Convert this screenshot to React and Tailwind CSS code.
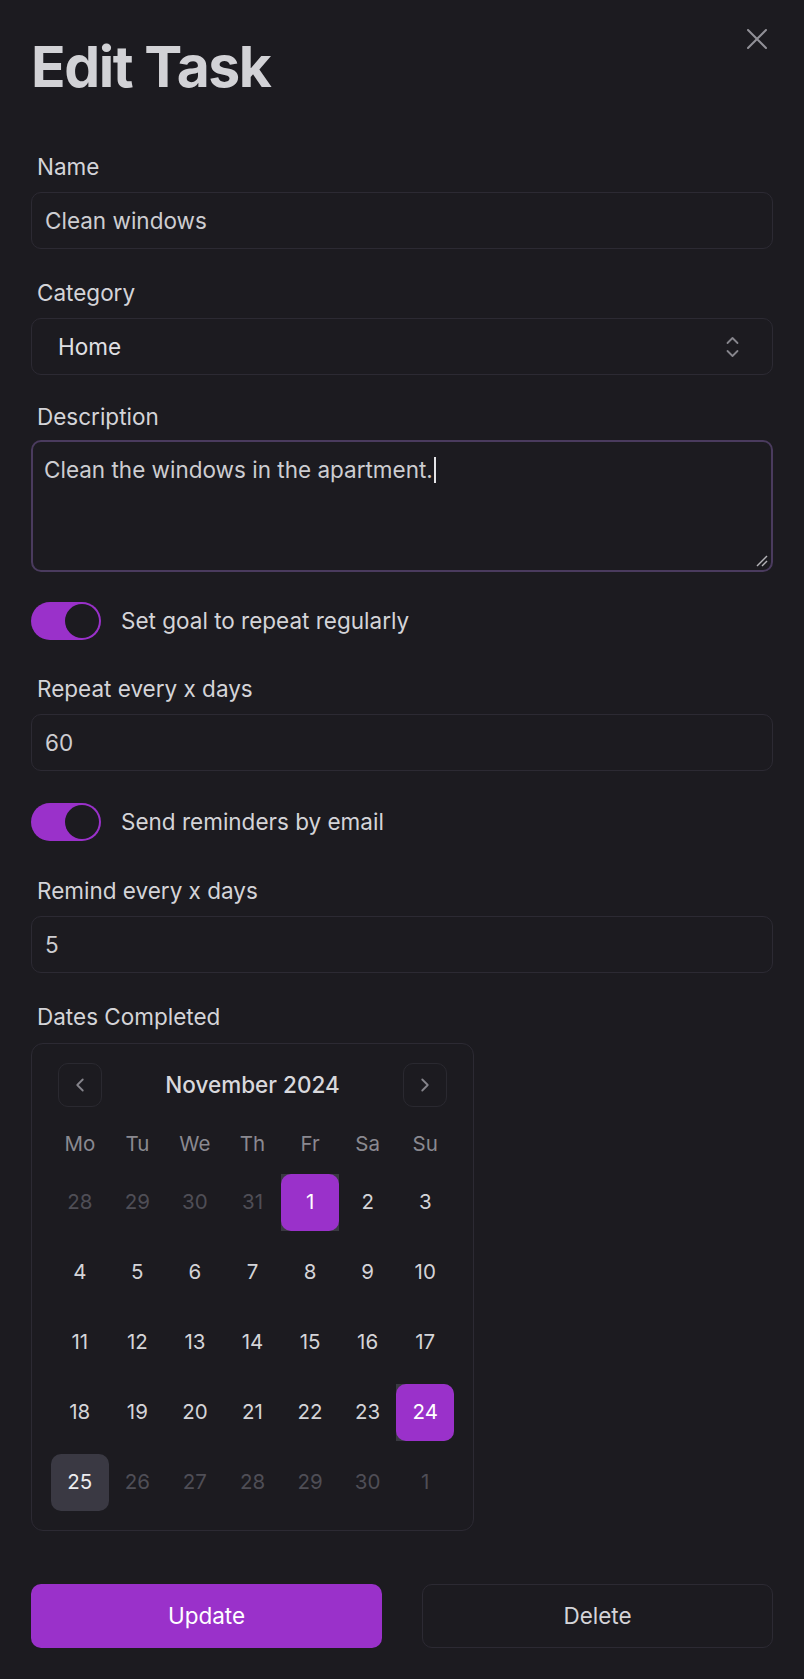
import React from "react";

const PURPLE = "bg-[#9a31ca]";

function Label({ children }) {
  return (
    <div className="pl-[6px] h-[28px] leading-[28px] text-[22.5px] text-[#d4d4d8]">
      {children}
    </div>
  );
}

function Toggle({ label }) {
  return (
    <div className="flex items-center gap-[20px]">
      <div className={`w-[70px] h-[38px] rounded-full ${PURPLE} p-[2px] flex`}>
        <div className="ml-auto size-[34px] rounded-full bg-[#1c1b20]" />
      </div>
      <span className="text-[22.5px] leading-[28px] text-[#d4d4d8]">{label}</span>
    </div>
  );
}

function Input({ value, className = "" }) {
  return (
    <div
      className={`h-[57px] rounded-[10px] border border-[#2c2a33] px-[13px] flex items-center text-[22.5px] text-[#cdcdd1] ${className}`}
    >
      {value}
    </div>
  );
}

const weekdays = ["Mo", "Tu", "We", "Th", "Fr", "Sa", "Su"];

const days = [
  [
    { d: 28, o: true },
    { d: 29, o: true },
    { d: 30, o: true },
    { d: 31, o: true },
    { d: 1, s: "full" },
    { d: 2 },
    { d: 3 },
  ],
  [4, 5, 6, 7, 8, 9, 10].map((d) => ({ d })),
  [11, 12, 13, 14, 15, 16, 17].map((d) => ({ d })),
  [
    { d: 18 },
    { d: 19 },
    { d: 20 },
    { d: 21 },
    { d: 22 },
    { d: 23 },
    { d: 24, s: "left" },
  ],
  [
    { d: 25, t: true },
    { d: 26, o: true },
    { d: 27, o: true },
    { d: 28, o: true },
    { d: 29, o: true },
    { d: 30, o: true },
    { d: 1, o: true },
  ],
];

function DayCell({ cell }) {
  if (cell.s) {
    return (
      <div
        className={`h-[57px] ${
          cell.s === "full" ? "bg-[#3a3942]" : "bg-[#3a3942] rounded-r-[10px]"
        }`}
      >
        <div
          className={`h-full w-full rounded-[10px] ${PURPLE} flex items-center justify-center text-[20.5px] text-white`}
        >
          {cell.d}
        </div>
      </div>
    );
  }
  if (cell.t) {
    return (
      <div className="h-[57px] rounded-[10px] bg-[#3a3943] flex items-center justify-center text-[20.5px] text-[#ececef]">
        {cell.d}
      </div>
    );
  }
  return (
    <div
      className={`h-[57px] flex items-center justify-center text-[20.5px] ${
        cell.o ? "text-[#4f4e56]" : "text-[#d4d4d8]"
      }`}
    >
      {cell.d}
    </div>
  );
}

function Calendar() {
  return (
    <div className="w-[443px] rounded-[12px] border border-[#2c2a33] p-[19px]">
      <div className="mx-[7px] h-[44px] flex items-center justify-between">
        <div className="size-[44px] rounded-[10px] border border-[#2a2930] flex items-center justify-center">
          <svg width="22" height="22" viewBox="0 0 24 24" fill="none" stroke="#85848b" strokeWidth="2" strokeLinecap="round" strokeLinejoin="round">
            <path d="M15 18l-6-6 6-6" />
          </svg>
        </div>
        <div className="text-[22.5px] font-medium text-[#d8d8dc]">November 2024</div>
        <div className="size-[44px] rounded-[10px] border border-[#2a2930] flex items-center justify-center">
          <svg width="22" height="22" viewBox="0 0 24 24" fill="none" stroke="#85848b" strokeWidth="2" strokeLinecap="round" strokeLinejoin="round">
            <path d="M9 18l6-6-6-6" />
          </svg>
        </div>
      </div>
      <div className="mt-[23px] h-[28px] grid grid-cols-7 text-[20.5px] leading-[28px] text-[#8a8990] text-center">
        {weekdays.map((w) => (
          <div key={w}>{w}</div>
        ))}
      </div>
      <div className="mt-[16px] grid grid-cols-7 gap-y-[13px]">
        {days.flat().map((c, i) => (
          <DayCell key={i} cell={c} />
        ))}
      </div>
    </div>
  );
}

export default function App() {
  return (
    <div className="relative min-h-screen bg-[#1c1b20] px-[31px] pb-[30px] [font-family:Inter,'Noto_Sans',sans-serif]">
      <button className="absolute top-[29px] right-[37px] size-[20px] flex items-center justify-center">
        <svg width="20" height="20" viewBox="0 0 20 20" fill="none" stroke="#919097" strokeWidth="2" strokeLinecap="round">
          <path d="M1 1l18 18M19 1L1 19" />
        </svg>
      </button>

      <div className="flex flex-col">
        <h1 className="pt-[38px] text-[57px] leading-[57px] font-bold tracking-[-0.025em] text-[#d2d2d6]">
          Edit Task
        </h1>

        <div className="mt-[58px]">
          <Label>Name</Label>
        </div>
        <Input className="mt-[11px]" value="Clean windows" />

        <div className="mt-[30px]">
          <Label>Category</Label>
        </div>
        <div className="mt-[11px] h-[57px] rounded-[10px] border border-[#2c2a33] pl-[26px] pr-[32px] flex items-center justify-between">
          <span className="text-[22.5px] text-[#e0e0e4]">Home</span>
          <svg width="15" height="24" viewBox="0 0 15 24" fill="none" stroke="#86858c" strokeWidth="1.8" strokeLinecap="round" strokeLinejoin="round">
            <path d="M2.5 8L7.5 3 12.5 8" />
            <path d="M2.5 16L7.5 21 12.5 16" />
          </svg>
        </div>

        <div className="mt-[28px]">
          <Label>Description</Label>
        </div>
        <div className="relative mt-[9px] h-[132px] rounded-[10px] border-2 border-[#4a3b5e] pl-[11px] pt-[14px]">
          <div className="text-[22.5px] leading-[28px] text-[#cdcdd1] flex items-center">
            <span>Clean the windows in the apartment.</span>
            <span className="ml-[1px] inline-block w-[2px] h-[26px] bg-[#e4e4e7]" />
          </div>
          <svg className="absolute right-[3px] bottom-[3px]" width="12" height="12" viewBox="0 0 12 12" fill="none" stroke="#b4b4b8" strokeWidth="1.4">
            <path d="M1 11L11 1" />
            <path d="M6 11L11 6" />
          </svg>
        </div>

        <div className="mt-[30px]">
          <Toggle label="Set goal to repeat regularly" />
        </div>

        <div className="mt-[35px]">
          <Label>Repeat every x days</Label>
        </div>
        <Input className="mt-[11px]" value="60" />

        <div className="mt-[32px]">
          <Toggle label="Send reminders by email" />
        </div>

        <div className="mt-[36px]">
          <Label>Remind every x days</Label>
        </div>
        <Input className="mt-[11px]" value="5" />

        <div className="mt-[30px]">
          <Label>Dates Completed</Label>
        </div>
        <div className="mt-[12px]">
          <Calendar />
        </div>

        <div className="mt-[53px] grid grid-cols-2 gap-[40px]">
          <button className={`h-[64px] rounded-[10px] ${PURPLE} text-[22.5px] text-white`}>
            Update
          </button>
          <button className="h-[64px] rounded-[10px] border border-[#2c2a33] text-[22.5px] text-[#d4d4d8]">
            Delete
          </button>
        </div>
      </div>
    </div>
  );
}
